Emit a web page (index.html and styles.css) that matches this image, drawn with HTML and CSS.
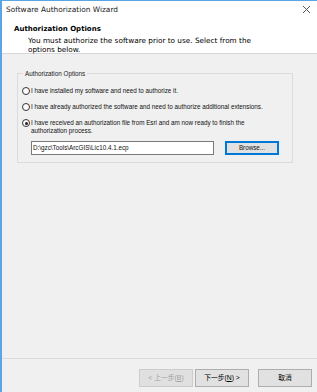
FILE: index.html
```html
<!DOCTYPE html>
<html lang="en">
<head>
<meta charset="UTF-8" />
<title>Software Authorization Wizard</title>
<link rel="stylesheet" href="styles.css">
</head>
<body>
<div class="window">
  <div class="head">
    <div class="titlebar">
      <span>Software Authorization Wizard</span>
      <svg class="close" width="9" height="9" viewBox="0 0 9 9"><path d="M1 1L8 8M8 1L1 8" stroke="#555" stroke-width="1"/></svg>
    </div>
    <div class="intro">
      <h1>Authorization Options</h1>
      <p>You must authorize the software prior to use. Select from the options below.</p>
    </div>
  </div>

  <div class="content">
    <fieldset class="group">
      <legend>Authorization Options</legend>
      <label class="opt"><span class="radio"></span><span>I have installed my software and need to authorize it.</span></label>
      <label class="opt"><span class="radio"></span><span>I have already authorized the software and need to authorize additional extensions.</span></label>
      <label class="opt last"><span class="radio on"></span><span class="wrap">I have received an authorization file from Esri and am now ready to finish the authorization process.</span></label>
      <div class="filerow">
        <div class="field">D:\gzc\Tools\ArcGIS\Lic10.4.1.ecp</div>
        <div class="btn focus">Browse...</div>
      </div>
    </fieldset>
  </div>

  <div class="footer">
    <div class="btn disabled">&lt; 上一步(<u>B</u>)</div>
    <div class="btn">下一步(<u>N</u>) &gt;</div>
    <div class="btn cancel">取消</div>
  </div>
</div>
</body>
</html>
```

FILE: styles.css
```css
body { margin: 0; font-family: "Liberation Sans", "Noto Sans CJK SC", sans-serif; }
.window { width: 317px; height: 392px; box-sizing: border-box; border-left: 2px solid #5aa5e4; border-top: 1px solid #5aa5e4; background: #f0f0f0; display: flex; flex-direction: column; color: #000; }
.head { background: #fff; border-bottom: 1px solid #d7d7d7; height: 53px; box-sizing: border-box; }
.titlebar { display: flex; justify-content: space-between; align-items: center; height: 17px; padding: 0 6px 0 4px; font-family: "DejaVu Sans", sans-serif; font-size: 7.4px; color: #222; }
.intro { padding-left: 12px; font-family: "DejaVu Sans", sans-serif; }
.intro h1 { margin: 7px 0 0; font-size: 7px; font-weight: bold; line-height: 9px; }
.intro p { margin: 2px 0 0 14px; width: 240px; font-size: 7.3px; line-height: 9px; }
.content { flex: 1; padding: 16px 24px 0 15px; }
.group { margin: 0; border: 1px solid #dcdcdc; padding: 10px 6px 10px 4px; height: 93px; box-sizing: border-box; font-size: 6.3px; color: #111; }
.group legend { padding: 0 2px; margin-left: 1px; font-size: 6.3px; color: #222; }
.opt { display: flex; align-items: flex-start; margin-bottom: 8px; line-height: 8px; }
.opt.last { margin-bottom: 6px; }
.opt .wrap { width: 232px; }
.radio { width: 8px; height: 8px; border: 1px solid #333; border-radius: 50%; background: #fff; flex: none; margin-right: 1px; box-sizing: border-box; position: relative; }
.radio.on::after { content: ""; position: absolute; left: 1.5px; top: 1.5px; width: 3px; height: 3px; border-radius: 50%; background: #222; }
.filerow { display: flex; align-items: center; gap: 11px; padding-left: 9px; }
.field { width: 183px; height: 14px; box-sizing: border-box; border: 1px solid #7a7a7a; background: #fff; padding-left: 1px; line-height: 12px; font-size: 6.3px; }
.btn { width: 54px; height: 14px; box-sizing: border-box; border: 1px solid #adadad; background: #e1e1e1; text-align: center; line-height: 12px; font-size: 6.3px; }
.btn.focus { border: 1px solid #0078d7; box-shadow: inset 0 0 0 1px #0078d7; }
.footer { border-top: 1px solid #dadada; height: 34px; box-sizing: border-box; display: flex; align-items: flex-start; padding: 10px 0 0 137px; }
.footer .btn { height: 18px; line-height: 16px; font-size: 6.8px; }
.footer .btn.disabled { color: #a0a0a0; border-color: #cccccc; background: #e0e0e0; margin-right: 2px; }
.footer .btn.cancel { margin-left: 9px; }
```
